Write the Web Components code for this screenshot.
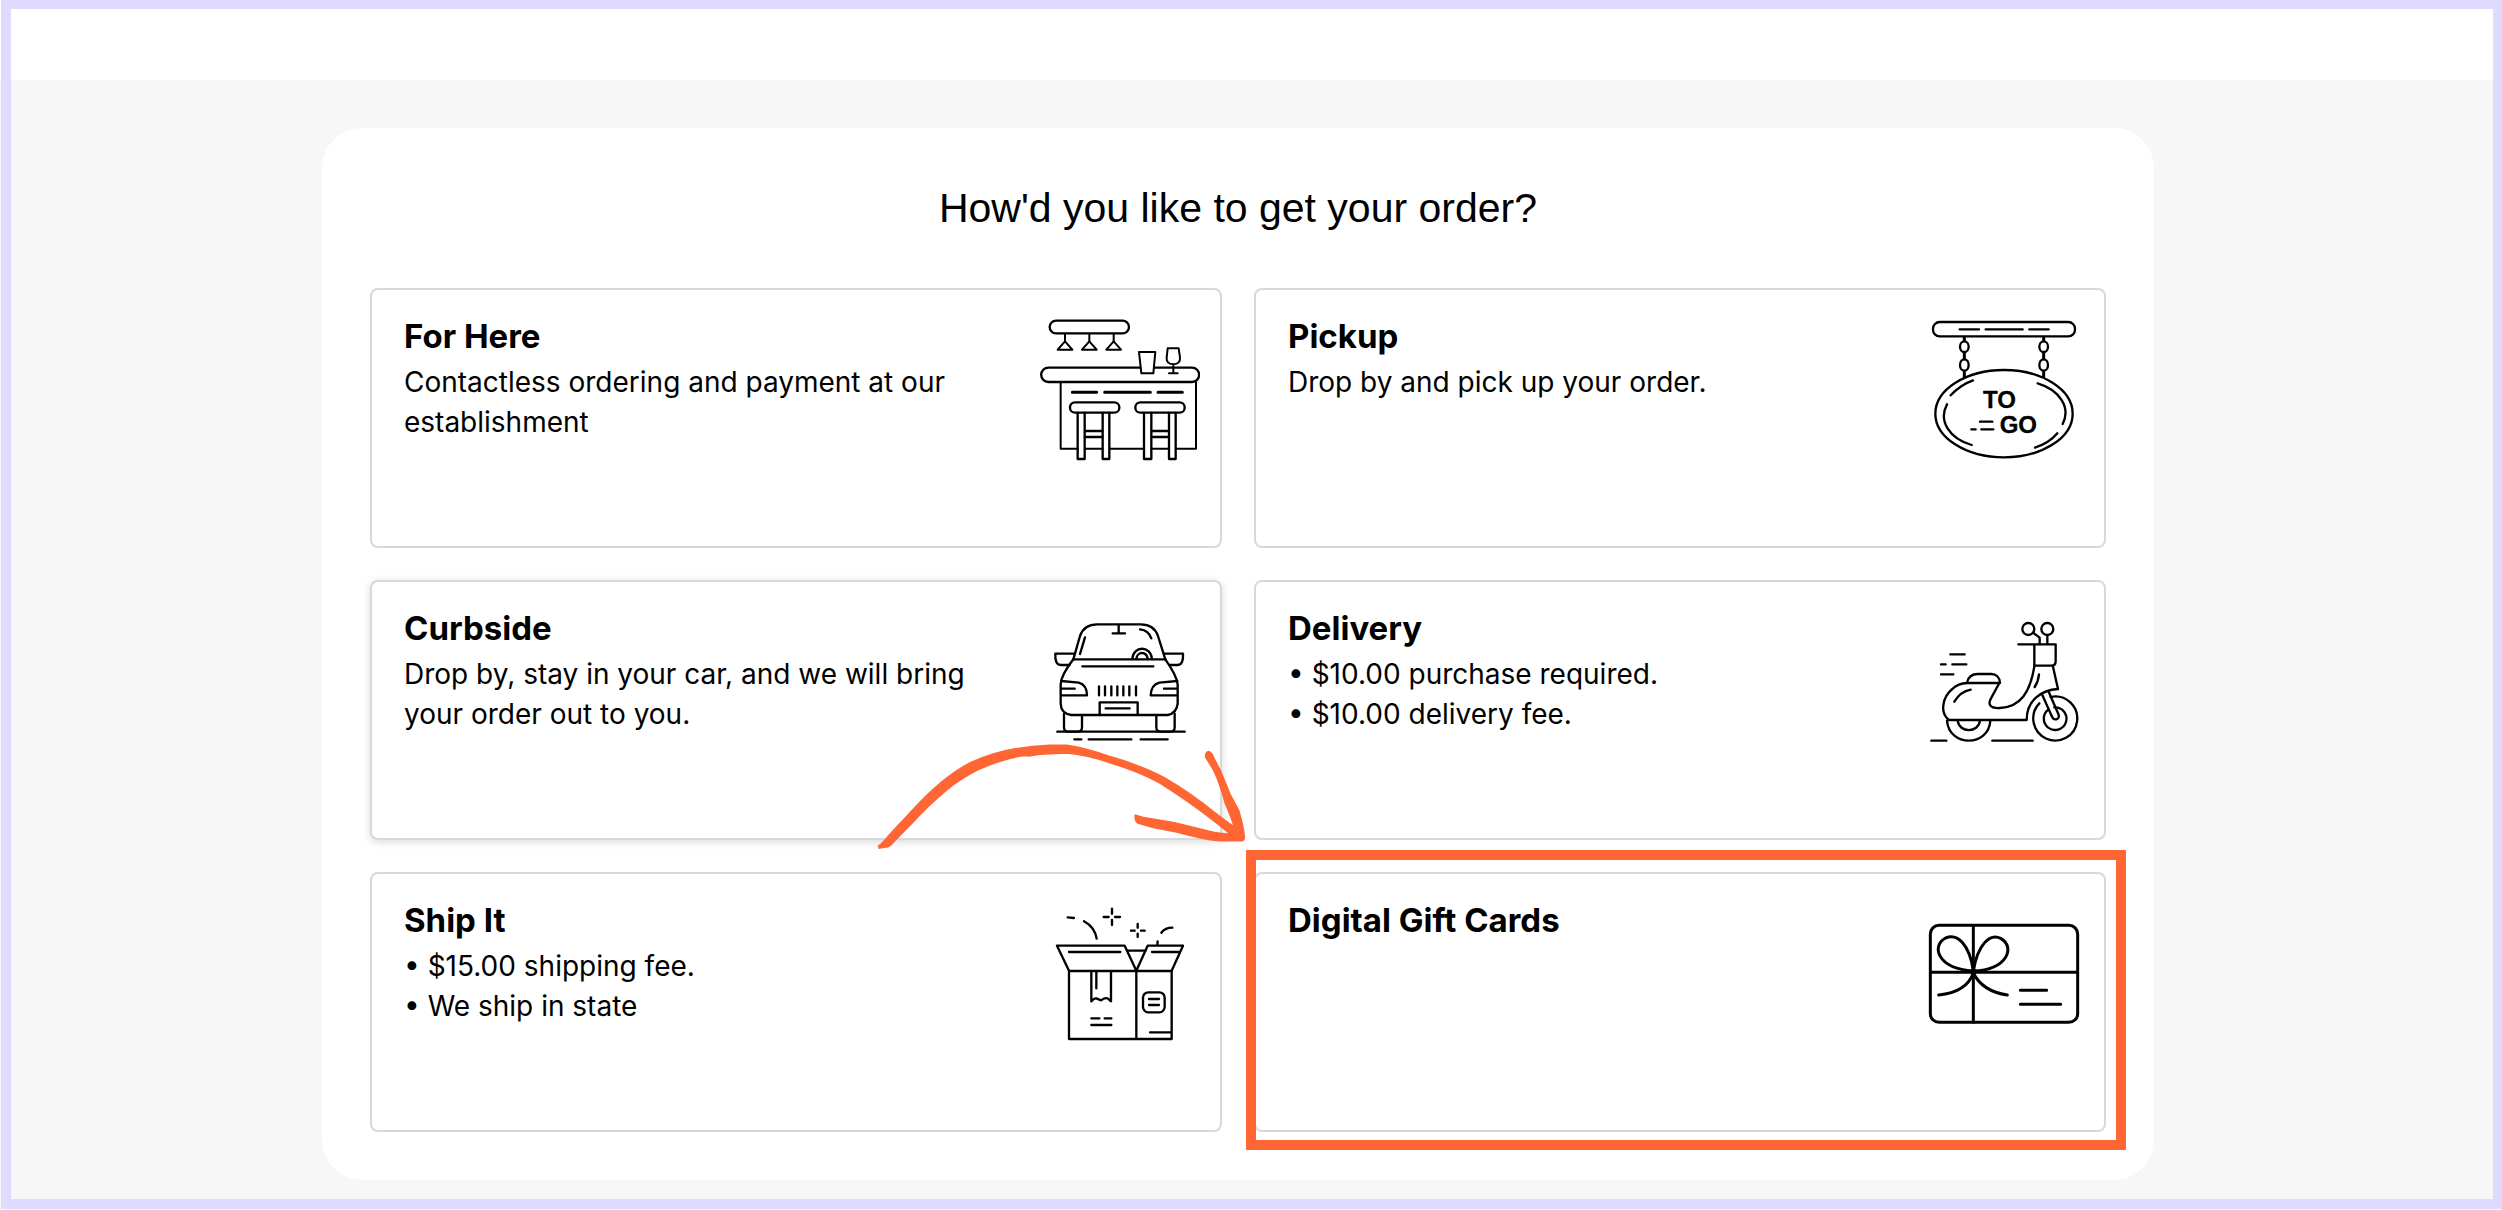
<!DOCTYPE html>
<html lang="en">
<head>
<meta charset="utf-8">
<meta name="viewport" content="width=device-width, initial-scale=1">
<title>Order options</title>
<style>
    :root {
        --color-page: #f7f7f7;
        --color-surface: #ffffff;
        --color-line: #d8d8d8;
        --color-text: #000000;
        --color-mark: #ff6633;
        --color-frame: #dedbff;
    }

    body {
        margin: 0;
        background-color: var(--color-page);
        color: var(--color-text);
        font-family: Inter, "Liberation Sans", sans-serif;
    }
</style>
</head>
<body>
<order-page>
    <order-panel heading="How'd you like to get your order?">
        <order-option icon="bar" heading="For Here">
            <p>Contactless ordering and payment at our establishment</p>
        </order-option>
        <order-option icon="sign" heading="Pickup">
            <p>Drop by and pick up your order.</p>
        </order-option>
        <order-option icon="car" heading="Curbside" active>
            <p>Drop by, stay in your car, and we will bring your order out to you.</p>
        </order-option>
        <order-option icon="scooter" heading="Delivery">
            <ul>
                <li>• $10.00 purchase required.</li>
                <li>• $10.00 delivery fee.</li>
            </ul>
        </order-option>
        <order-option icon="box" heading="Ship It">
            <ul>
                <li>• $15.00 shipping fee.</li>
                <li>• We ship in state</li>
            </ul>
        </order-option>
        <call-out>
            <order-option icon="gift" heading="Digital Gift Cards"></order-option>
        </call-out>
    </order-panel>
</order-page>

<script>
// Line icons, each with its own view box
const Icons = {
    bar: {
        box: "60 30 480 480",
        art: `
        <rect x="89" y="62" width="238" height="38" rx="19"/>
        <path class="Thin" d="M135 101V124M208 101V124M281 101V124"/>
        <path class="Thin" d="M135 124L113 149H157ZM208 124L186 149H230ZM281 124L259 149H303Z"/>
        <path d="M361 203H85A21 21 0 0 0 85 246H516A21 21 0 0 0 516 203H403"/>
        <path class="Thin" d="M357 156H406L400 220H364Z"/>
        <path class="Thin" d="M443 145H476L480 172Q482 192 460 193Q438 192 440 172ZM460 193V219M447 220H473"/>
        <path class="Thin" d="M122 247V446H173M196 446H247M269 446H371M394 446H446M468 446H528V247"/>
        <path class="Thick" d="M157 277H230M254 277H391M414 277H487"/>
        <rect x="150" y="307" width="148" height="31" rx="15"/>
        <rect x="346" y="307" width="148" height="31" rx="15"/>
        <path d="M173 339V477H194V339M248 339V477H268V339M372 339V477H394V339M447 339V477H467V339"/>
        <path d="M195 393H247M195 411H247M395 393H446M395 411H446"/>`
    },
    sign: {
        box: "42 30 480 480",
        art: `
        <rect x="69" y="66" width="426" height="43" rx="20"/>
        <path d="M149 88H207M227 88H338M358 88H416"/>
        <path class="Thick" d="M163 113V121M163 159V176M163 215V230M401 113V121M401 159V176M401 215V230"/>
        <ellipse cx="163" cy="140" rx="13" ry="16"/>
        <ellipse cx="163" cy="195" rx="13" ry="17"/>
        <ellipse cx="401" cy="140" rx="13" ry="16"/>
        <ellipse cx="401" cy="195" rx="13" ry="17"/>
        <ellipse cx="282" cy="341" rx="206" ry="131"/>
        <path d="M189 241Q150 255 122 286M111 313C84 364 119 416 185 435M383 250C450 270 483 323 458 372M442 400Q418 429 375 443"/>
        <path d="M210 365H247M184 388H197M214 388H250"/>
        <text x="219" y="325">TO</text>
        <text x="269" y="400">GO</text>`
    },
    car: {
        box: "30 6 480 480",
        art: `
        <path d="M130 178L150 108Q162 73 202 73H332Q372 73 384 108L406 178"/>
        <path d="M266 75V99M248 100H285M165 112L150 162M330 88Q356 91 364 115"/>
        <path d="M130 178H406M157 199H370"/>
        <path d="M130 178Q93 226 92 253V311Q93 340 124 345H413Q440 340 443 311V253Q440 226 406 178"/>
        <path d="M133 161H76Q74 194 92 195H119M402 161H459Q461 194 443 195H418"/>
        <path d="M307 177C309 136 363 136 366 177M319 177C321 153 350 153 353 177"/>
        <path d="M94 243L146 248Q171 255 171 286H94M94 266H134M442 243L388 248Q363 255 362 286H441M441 266H402"/>
        <path d="M207 259V286M225 259V286M244 259V286M262 259V286M280 259V286M298 259V286M318 259V286"/>
        <path d="M209 345V307H323V345M227 325H299"/>
        <path d="M102 341V382Q102 395 115 395H143Q156 395 156 382V347M379 347V382Q379 395 392 395H421Q434 395 434 382V341"/>
        <path d="M82 395H464M133 418H154M176 418H304M332 418H413"/>`
    },
    scooter: {
        box: "42 6 480 480",
        art: `
        <circle cx="355" cy="87" r="18"/>
        <circle cx="412" cy="87" r="18"/>
        <path d="M369 98L389 113V132M412 106V132M325 133H437V184Q437 197 424 197H373V135"/>
        <path d="M373 199C361 275 333 320 270 324C239 326 233 312 243 295L268 249"/>
        <path d="M429 200L444 267C395 270 350 300 350 360H117C88 339 98 290 127 267Q144 250 172 249H270C269 231 258 222 244 222H203C183 222 174 234 171 248"/>
        <path d="M182 269Q151 275 133 305M387 223Q385 244 374 261"/>
        <path d="M111 362C117 442 236 442 241 362M143 362C148 400 205 400 210 362"/>
        <path d="M422 291A66 66 0 1 1 388 310"/>
        <path d="M433 322A34 34 0 1 1 416 328"/>
        <path d="M396 283L426 350Q430 360 439 358Q450 354 445 342L416 275"/>
        <path d="M121 163H164M93 193H107M127 193H169M93 223H130M64 422H109M247 422H368"/>`
    },
    box: {
        box: "30 12 480 480",
        art: `
        <path d="M117 243H425V447H117ZM319 243V447M117 242L81 167H284L319 242L353 167H459L425 242"/>
        <path d="M117 186H271M366 186H447M293 182H346"/>
        <path d="M184 244V334Q191 324 199 325L213 331Q227 321 234 326L243 334V244M199 244V295"/>
        <path d="M184 385H208M224 385H244M184 405H244M360 427H423"/>
        <rect x="339" y="307" width="65" height="60" rx="16"/>
        <path d="M357 327H387M357 345H387"/>
        <path d="M113 82L132 84M162 94Q194 111 200 146M382 164L383 154M394 128Q406 113 427 113"/>
        <path d="M246 56V71M246 90V105M221 81H236M255 81H270M323 102V113M323 131V141M303 122H314M333 122H344"/>`
    },
    gift: {
        box: "42 -18 480 480",
        art: `
        <g class="Thick">
        <rect x="61" y="76" width="442" height="291" rx="26"/>
        <path d="M190 77V367M62 217H502M331 271H410M331 313H452"/>
        <path d="M190 212C178 133 142 99 107 114C65 135 77 205 190 213M190 212C204 133 239 99 272 115C316 140 295 208 190 213"/>
        <path d="M190 219Q169 277 86 285M190 219Q217 274 292 285"/>
        <circle cx="190" cy="215" r="5"/>
        </g>`
    }
};

class OrderIcon extends HTMLElement
{
    constructor()
    {
        super();
        this.attachShadow({mode: "open"});
    }

    connectedCallback()
    {
        const Icon = Icons[this.getAttribute("name")];
        this.shadowRoot.innerHTML = `
        <svg viewBox="${Icon.box}" aria-hidden="true">${Icon.art}</svg>
        <style>
            :host {
                display: block;
                flex: none;
                width: 160px;
                height: 160px;
            }

            svg {
                display: block;
                width: 100%;
                height: 100%;
                fill: none;
                stroke: currentColor;
                stroke-width: 7px;
                stroke-linecap: round;
                stroke-linejoin: round;
            }

            .Thin {
                stroke-width: 6px;
            }

            .Thick {
                stroke-width: 9px;
            }

            text {
                fill: currentColor;
                stroke-width: 1px;
                font: bold 72px "Liberation Sans", sans-serif;
            }
        </style>
        `;
    }
}

class OrderOption extends HTMLElement
{
    constructor()
    {
        super();
        this.attachShadow({mode: "open"});
    }

    connectedCallback()
    {
        this.shadowRoot.innerHTML = `
        <a href="#">
            <div class="Text">
                <h2>${this.getAttribute("heading")}</h2>
                <slot></slot>
            </div>
            <order-icon name="${this.getAttribute("icon")}"></order-icon>
        </a>
        <style>
            :host {
                display: grid;
                min-height: 260px;
            }

            a {
                display: flex;
                align-items: flex-start;
                gap: 16px;
                box-sizing: border-box;
                padding: 20px 20px 20px 32px;
                border: 2px solid var(--color-line);
                border-radius: 8px;
                background-color: var(--color-surface);
                color: inherit;
                text-decoration: none;
            }

            a:hover, :host([active]) a {
                box-shadow: 0 2px 8px rgba(0, 0, 0, 0.15);
            }

            .Text {
                flex: 1;
                padding-top: 6px;
                font-size: 28px;
                line-height: 40px;
            }

            h2 {
                margin: 0 0 6px;
                font-size: 33px;
                font-weight: 700;
                line-height: 40px;
            }

            ::slotted(p), ::slotted(ul) {
                margin: 0;
                padding: 0;
                list-style: none;
            }
        </style>
        `;
    }
}

class CallOut extends HTMLElement
{
    constructor()
    {
        super();
        const Shadow = this.attachShadow({mode: "open"});
        Shadow.innerHTML = `
        <slot></slot>
        <div class="Outline"></div>
        <svg class="Arrow" viewBox="0 0 1320 720" aria-hidden="true">
            <path d="M56 348Q70 339 88 315L158 240Q250 140 330 99Q430 51 570 46L620 46Q670 52 750 80Q850 109 918 146Q1000 195 1060 245L1124 293Q1110 250 1096 220Q1080 160 1062 122L1037 81Q1036 66 1047 65Q1057 69 1061 84L1080 120L1110 193L1136 242Q1150 287 1153 322Q1153 333 1140 332L1077 332Q1030 328 950 306L880 292L834 279Q824 272 826 256Q835 259 850 263L940 278L1060 307Q1090 313 1112 312L1060 271Q990 216 900 159Q840 125 750 98Q680 74 620 69L570 71Q530 72 508 78L490 76Q420 88 350 121Q300 147 262 178Q200 230 160 275L104 332Q88 352 76 351L58 354Z"/>
        </svg>
        <style>
            :host {
                display: grid;
                position: relative;
            }

            .Outline {
                position: absolute;
                inset: -22px -20px -18px -8px;
                border: 10px solid var(--color-mark);
                pointer-events: none;
            }

            .Arrow {
                position: absolute;
                left: -394px;
                top: -142px;
                width: 440px;
                height: 240px;
                fill: var(--color-mark);
                stroke: var(--color-mark);
                stroke-width: 5px;
                pointer-events: none;
            }
        </style>
        `;
    }
}

class OrderPanel extends HTMLElement
{
    constructor()
    {
        super();
        this.attachShadow({mode: "open"});
    }

    connectedCallback()
    {
        this.shadowRoot.innerHTML = `
        <h1>${this.getAttribute("heading")}</h1>
        <div class="Options"><slot></slot></div>
        <style>
            :host {
                display: flex;
                flex-direction: column;
                gap: 48px;
                box-sizing: border-box;
                width: 100%;
                max-width: 1832px;
                padding: 48px;
                border-radius: 40px;
                background-color: var(--color-surface);
            }

            h1 {
                margin: 0;
                text-align: center;
                font-family: "Liberation Sans", Arial, sans-serif;
                font-size: 41px;
                font-weight: 400;
                line-height: 64px;
            }

            .Options {
                display: grid;
                grid-template-columns: repeat(2, minmax(0, 1fr));
                gap: 32px;
            }
        </style>
        `;
    }
}

class OrderPage extends HTMLElement
{
    constructor()
    {
        super();
        const Shadow = this.attachShadow({mode: "open"});
        Shadow.innerHTML = `
        <header></header>
        <main><slot></slot></main>
        <div class="Frame"></div>
        <style>
            :host {
                display: flex;
                flex-direction: column;
                min-height: 100vh;
            }

            header {
                height: 80px;
                background-color: var(--color-surface);
            }

            main {
                display: flex;
                justify-content: center;
                padding: 48px 26px 28px 0;
            }

            .Frame {
                position: fixed;
                inset: 0 0 1px 1px;
                border: solid var(--color-frame);
                border-width: 9px 9px 10px 10px;
                pointer-events: none;
            }
        </style>
        `;
    }
}

customElements.define("order-icon", OrderIcon);
customElements.define("order-option", OrderOption);
customElements.define("call-out", CallOut);
customElements.define("order-panel", OrderPanel);
customElements.define("order-page", OrderPage);
</script>
</body>
</html>
